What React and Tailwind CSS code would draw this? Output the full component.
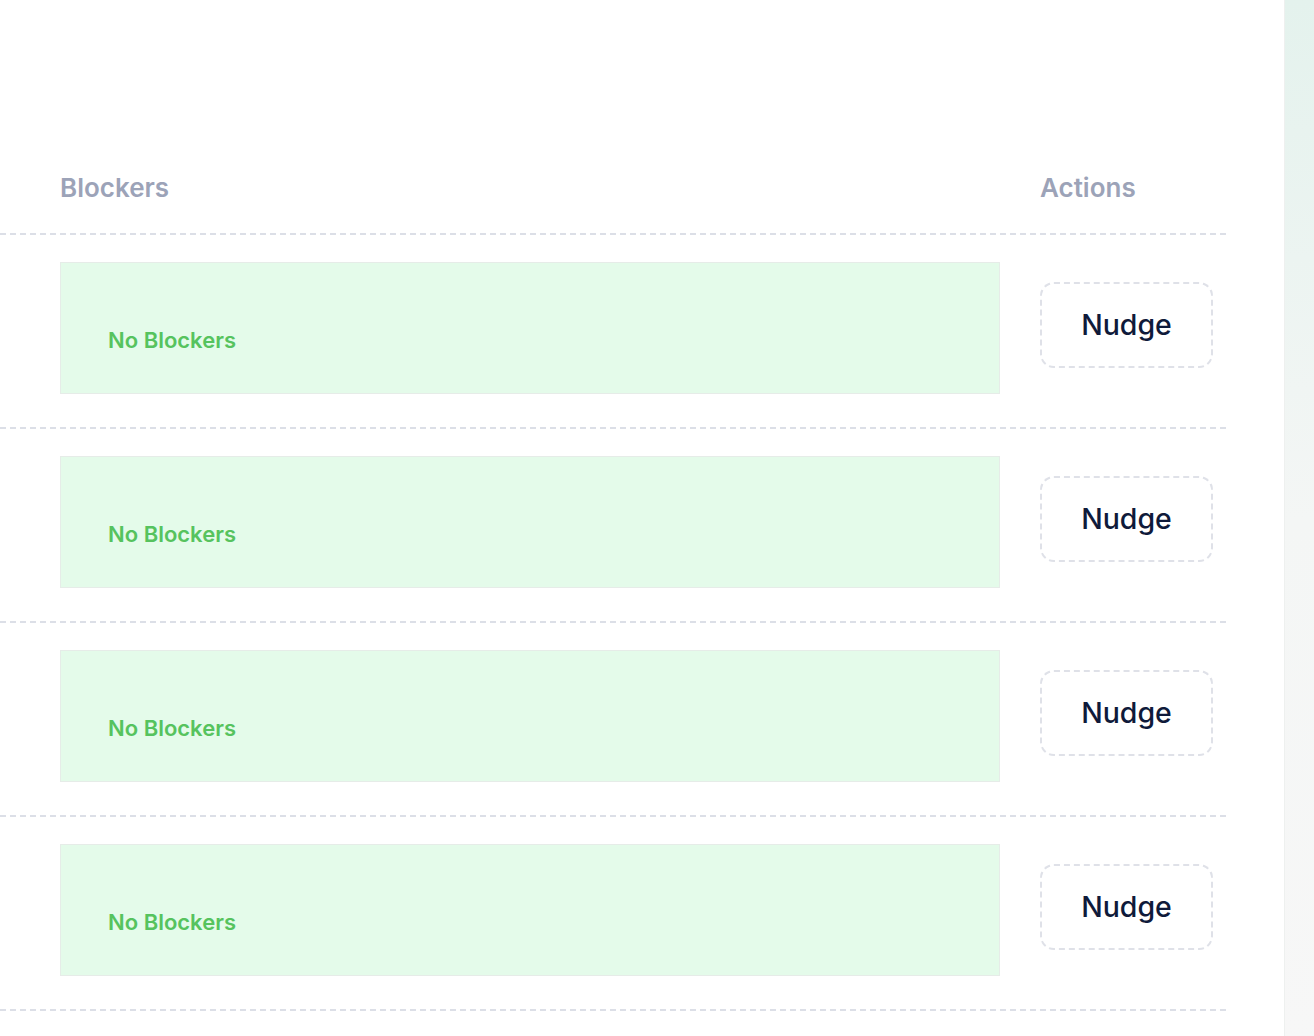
import React from 'react';

const rows = [1, 2, 3, 4];

function Dashed() {
  return <div className="h-[2px] bg-[repeating-linear-gradient(to_right,#dcdfe7_0_6px,transparent_6px_10px)]" />;
}

export default function App() {
  return (
    <div className="flex min-h-[1036px] bg-white" style={{ fontFamily: 'Inter, "Noto Sans", sans-serif' }}>
      {/* main table */}
      <div className="w-[1284px] shrink-0 pt-[171px]">
        <div className="w-[1226px]">
          {/* header */}
          <div className="flex pb-[28px]">
            <div className="w-[1000px] pl-[60px] text-[26px] leading-[34px] font-semibold text-[#9ca3b8]">Blockers</div>
            <div className="pl-[40px] text-[26px] leading-[34px] font-semibold text-[#9ca3b8]">Actions</div>
          </div>
          <Dashed />

          {rows.map((r) => (
            <div key={r}>
              <div className="flex pt-[27px] pb-[33px]">
                <div className="w-[1000px] pl-[60px]">
                  <div className="h-[132px] border border-[#e6ece8] bg-[#e4fbea] pl-[47px] pt-[62px]">
                    <span className="text-[22px] leading-[30px] font-semibold text-[#56c35e]">No Blockers</span>
                  </div>
                </div>
                <div className="pl-[40px] pt-[20px]">
                  <button className="flex h-[86px] w-[173px] items-center justify-center rounded-[14px] border-2 border-dashed border-[#dfe1e8] bg-white text-[28.5px] font-medium text-[#0f1a3a]">
                    Nudge
                  </button>
                </div>
              </div>
              <Dashed />
            </div>
          ))}
        </div>
      </div>

      {/* right strip */}
      <div className="flex-1 border-l border-[#eef0ef] bg-gradient-to-b from-[#e4f2ed] via-[#f4f6f5] to-[#f7f7f7]" />
    </div>
  );
}
